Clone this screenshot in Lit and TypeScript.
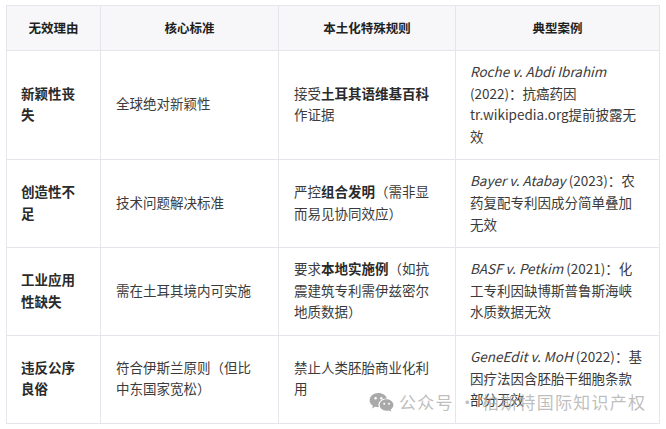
import { LitElement, html, css } from "lit";
import { customElement } from "lit/decorators.js";

@customElement("app-root")
export class AppRoot extends LitElement {
  static styles = css`
    :host {
      display: block;
      width: 666px;
      height: 429px;
      background: #fff;
      position: relative;
      overflow: hidden;
      font-family: "Noto Sans CJK SC", "Noto Sans", sans-serif;
      font-size: 13.5px;
      line-height: 21.6px;
      color: #3b3b3b;
    }
    .wrap { padding: 5px 0 0 6px; }
    table {
      border-collapse: collapse;
      table-layout: fixed;
      width: 653px;
    }
    th, td {
      border: 1px solid #e5e6eb;
      vertical-align: middle;
      text-align: left;
    }
    td { padding: 10px 15px 12px; }
    td.k, td.c { padding-left: 14px; }
    th {
      padding: 11px 15px;
      background: #f7f7f9;
      color: #1f1f1f;
      font-weight: 700;
      text-align: center;
      font-size: 12.5px;
      height: 22px;
    }
    td.k { font-weight: 700; color: #2a2a2a; }
    td b { font-weight: 700; color: #2a2a2a; }
    td i { font-style: italic; }
    .h1 { height: 87px; }
    .h2 { height: 66px; }
    .h3 { height: 64px; }
    .h4 { height: 66px; }
    .mark {
      position: absolute;
      left: 369px;
      top: 389px;
      display: flex;
      align-items: center;
      gap: 5px;
      color: rgba(165, 165, 165, 0.72);
      font-size: 17px;
      line-height: 26px;
      letter-spacing: 1.25px;
      white-space: nowrap;
    }
    .mark svg { display: block; }
  `;

  render() {
    return html`
      <div class="wrap">
        <table>
          <colgroup>
            <col style="width:94px" />
            <col style="width:178px" />
            <col style="width:177px" />
            <col style="width:204px" />
          </colgroup>
          <thead>
            <tr>
              <th>无效理由</th>
              <th>核心标准</th>
              <th>本土化特殊规则</th>
              <th>典型案例</th>
            </tr>
          </thead>
          <tbody>
            <tr class="h1">
              <td class="k">新颖性丧失</td>
              <td>全球绝对新颖性</td>
              <td>接受<b>土耳其语维基百科</b>作证据</td>
              <td class="c"><i>Roche v. Abdi Ibrahim</i> (2022)：抗癌药因 tr.wikipedia.org提前披露无效</td>
            </tr>
            <tr class="h2">
              <td class="k">创造性不足</td>
              <td>技术问题解决标准</td>
              <td>严控<b>组合发明</b>（需非显而易见协同效应）</td>
              <td class="c"><i>Bayer v. Atabay</i> (2023)：农药复配专利因成分简单叠加无效</td>
            </tr>
            <tr class="h3">
              <td class="k">工业应用性缺失</td>
              <td>需在土耳其境内可实施</td>
              <td>要求<b>本地实施例</b>（如抗震建筑专利需伊兹密尔地质数据）</td>
              <td class="c"><i>BASF v. Petkim</i> (2021)：化工专利因缺博斯普鲁斯海峡水质数据无效</td>
            </tr>
            <tr class="h4">
              <td class="k">违反公序良俗</td>
              <td>符合伊斯兰原则（但比中东国家宽松）</td>
              <td>禁止人类胚胎商业化利用</td>
              <td class="c"><i>GeneEdit v. MoH</i> (2022)：基因疗法因含胚胎干细胞条款部分无效</td>
            </tr>
          </tbody>
        </table>
      </div>
      <div class="mark">
        <svg width="25" height="21" viewBox="0 0 25 21" aria-hidden="true">
          <path fill="#a9a9a9" d="M9.5 1C4.5 1 .6 4.2.6 8.2c0 2.3 1.3 4.3 3.3 5.6l-.8 2.6 3-1.6c1 .3 2 .4 3 .4h.7c-.3-.7-.4-1.4-.4-2.2 0-3.700 3.500-6.600 7.800-6.600h.7C16.900 3.300 13.500 1 9.500 1z"/>
          <path fill="#a9a9a9" d="M24.400 13c0-3.100-3.100-5.700-6.900-5.700s-6.900 2.600-6.900 5.700 3.100 5.700 6.900 5.700c.8 0 1.600-.1 2.300-.3l2.500 1.400-.7-2.200c1.700-1.100 2.800-2.700 2.800-4.600z"/>
          <circle cx="6.600" cy="6.300" r="1.200" fill="#fff"/>
          <circle cx="12.300" cy="6.300" r="1.200" fill="#fff"/>
          <circle cx="15.200" cy="11.800" r="1" fill="#fff"/>
          <circle cx="20" cy="11.800" r="1" fill="#fff"/>
        </svg>
        <span>公众号 · 柏斯特国际知识产权</span>
      </div>
    `;
  }
}
